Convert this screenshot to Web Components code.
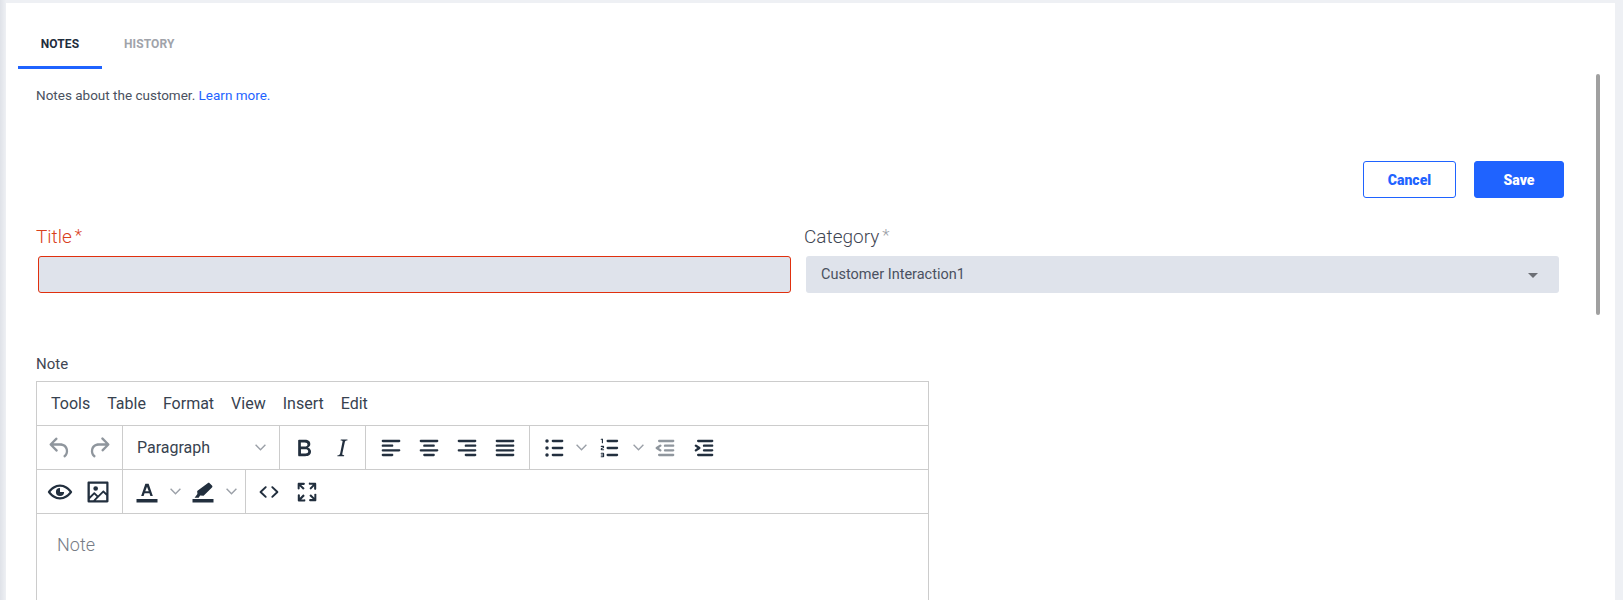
<!DOCTYPE html>
<html lang="en"><head><meta charset="utf-8"><title>Notes</title>
<style>
html,body{margin:0;height:600px;overflow:hidden}
body{background:linear-gradient(90deg,#dfe2e8 0,#eef0f4 6px);font-family:Roboto,"Liberation Sans",sans-serif}
</style></head><body>
<x-panel>
  <x-tabs slot="tabs"></x-tabs>
  <x-intro>Notes about the customer. <a slot="link">Learn more.</a></x-intro>
  <x-actions></x-actions>
  <x-fields></x-fields>
  <x-editor label="Note" placeholder="Note"></x-editor>
</x-panel>
<script>
const el=(name,css,html,init)=>customElements.define(name,class extends HTMLElement{
  constructor(){super();this.attachShadow({mode:'open'}).innerHTML=`<style>${css}</style>${html}`;}
  connectedCallback(){init&&init.call(this,this.shadowRoot)}
});
el('x-panel',`:host{display:block;position:relative;margin:3px 8px 0 6px;height:597px;background:#fff;overflow:hidden}
.bar{position:absolute;left:1590px;top:71px;width:4px;height:241px;background:#a0a0a0;border-radius:2px}
.in{padding:0 0 0 12px}`,`<div class="in"><slot name="tabs"></slot><slot></slot></div><div class="bar"></div>`);
el('x-tabs',`:host{display:flex;height:66px;font:700 12px/16px Roboto,sans-serif}
div{box-sizing:border-box;height:66px;display:flex;align-items:center;justify-content:center;padding:25px 0 6px;border-bottom:3px solid transparent;text-transform:uppercase;letter-spacing:.1px}
.a{width:84px;color:#1f2d3d;border-bottom-color:#1f63ff}
.b{padding-left:22px;color:#a0a3aa}`,`<div class="a">Notes</div><div class="b">History</div>`);
el('x-intro',`:host{display:block;margin:16px 0 0 18px;font:400 13.5px/20px Roboto,sans-serif;color:#4a5160}
::slotted(a){color:#1f63ff}`,`<slot></slot><slot name="link"></slot>`);
el('x-actions',`:host{display:flex;justify-content:flex-end;gap:18px;margin:56px 39px 0 0;box-sizing:border-box;width:1546px}
button{box-sizing:border-box;height:37px;font:900 14px Roboto,sans-serif;border-radius:3px;border:1px solid #1f63ff;padding:0}
.c{width:93px;background:#fff;color:#1f63ff}.s{width:90px;background:#1f63ff;color:#fff}`,`<button class="c">Cancel</button><button class="s">Save</button>`);
el('x-fields',`:host{display:grid;grid-template-columns:768px 768px;margin:27px 0 0 18px}
label{display:block;height:24px;font:300 19px/24px Roboto,sans-serif;color:#3f4653;margin-bottom:7px}
label i{font-style:normal;font-size:17px;line-height:0;color:#9a9ea6;margin-left:3px;position:relative;top:-2px}
.t label,.t label i{color:#d9401c}
.box{box-sizing:border-box;width:753px;height:37px;margin-left:2px;background:#dfe3eb;border-radius:3px}
.t .box{border:1px solid #e0300e}
.s .box{display:flex;align-items:center;justify-content:space-between;padding:0 21px 0 15px;font:400 14.5px Roboto,sans-serif;color:#4a5160}
.s b{width:0;height:0;border:5px solid transparent;border-top:5px solid #6c6f75;border-bottom:0;margin-top:1px}`,
`<div class="t"><label>Title<i>*</i></label><div class="box"></div></div>
<div class="s"><label>Category<i>*</i></label><div class="box"><span>Customer Interaction1</span><b></b></div></div>`);
const P={
undo:'M6.4 8H12c3.7 0 6.2 2 6.8 5.1.6 2.7-.4 5.6-2.3 6.8a1 1 0 0 1-1-1.8c1.1-.6 1.8-2.7 1.4-4.6-.5-2.1-2.1-3.5-4.9-3.5H6.4l3.3 3.3a1 1 0 1 1-1.4 1.4l-5-5a1 1 0 0 1 0-1.4l5-5a1 1 0 0 1 1.4 1.4L6.4 8Z',
redo:'M17.6 10H12c-2.8 0-4.4 1.4-4.9 3.5-.4 2 .3 4 1.4 4.6a1 1 0 1 1-1 1.8c-2-1.2-2.9-4.1-2.3-6.8.6-3 3-5.1 6.8-5.1h5.6l-3.3-3.3a1 1 0 1 1 1.4-1.4l5 5a1 1 0 0 1 0 1.4l-5 5a1 1 0 0 1-1.4-1.4l3.3-3.3Z',
bold:'M7.8 19c-.3 0-.5 0-.6-.2l-.2-.5V5.7c0-.2 0-.4.2-.5l.6-.2h5c1.5 0 2.7.3 3.5 1 .7.6 1.1 1.4 1.1 2.5a3 3 0 0 1-.6 1.9c-.4.6-1 1-1.6 1.2.4.1.9.3 1.3.6s.8.7 1 1.2c.4.4.5 1 .5 1.6 0 1.3-.4 2.3-1.3 3-.8.7-2.1 1-3.8 1H7.8Zm5-8.3c.6 0 1.2-.1 1.6-.5.4-.3.6-.7.6-1.3 0-1.1-.8-1.7-2.3-1.7H9.3v3.5h3.4Zm.5 6c.7 0 1.3-.1 1.7-.4.4-.4.6-.9.6-1.5s-.2-1-.7-1.4c-.4-.3-1-.4-2-.4H9.4v3.8h4Z',
italic:'m16.7 4.7-.1.9h-.3c-.6 0-1 0-1.4.3-.3.3-.4.6-.5 1.1l-2.1 9.8v.6c0 .5.4.8 1.4.8h.2l-.2.8H8l.2-.8h.2c1.1 0 1.8-.5 2-1.5l2-9.8.1-.5c0-.6-.4-.8-1.4-.8h-.3l.2-.9h5.8Z',
al:'M5 5h14c.6 0 1 .4 1 1s-.4 1-1 1H5a1 1 0 1 1 0-2Zm0 4h8c.6 0 1 .4 1 1s-.4 1-1 1H5a1 1 0 1 1 0-2Zm0 8h8c.6 0 1 .4 1 1s-.4 1-1 1H5a1 1 0 0 1 0-2Zm0-4h14c.6 0 1 .4 1 1s-.4 1-1 1H5a1 1 0 0 1 0-2Z',
ac:'M5 5h14c.6 0 1 .4 1 1s-.4 1-1 1H5a1 1 0 1 1 0-2Zm3 4h8c.6 0 1 .4 1 1s-.4 1-1 1H8a1 1 0 1 1 0-2Zm0 8h8c.6 0 1 .4 1 1s-.4 1-1 1H8a1 1 0 0 1 0-2Zm-3-4h14c.6 0 1 .4 1 1s-.4 1-1 1H5a1 1 0 0 1 0-2Z',
ar:'M5 5h14c.6 0 1 .4 1 1s-.4 1-1 1H5a1 1 0 1 1 0-2Zm6 4h8c.6 0 1 .4 1 1s-.4 1-1 1h-8a1 1 0 0 1 0-2Zm0 8h8c.6 0 1 .4 1 1s-.4 1-1 1h-8a1 1 0 0 1 0-2Zm-6-4h14c.6 0 1 .4 1 1s-.4 1-1 1H5a1 1 0 0 1 0-2Z',
aj:'M5 5h14c.6 0 1 .4 1 1s-.4 1-1 1H5a1 1 0 1 1 0-2Zm0 4h14c.6 0 1 .4 1 1s-.4 1-1 1H5a1 1 0 1 1 0-2Zm0 4h14c.6 0 1 .4 1 1s-.4 1-1 1H5a1 1 0 0 1 0-2Zm0 4h14c.6 0 1 .4 1 1s-.4 1-1 1H5a1 1 0 0 1 0-2Z',
ul:'M11 5h8c.6 0 1 .4 1 1s-.4 1-1 1h-8a1 1 0 0 1 0-2Zm0 6h8c.6 0 1 .4 1 1s-.4 1-1 1h-8a1 1 0 0 1 0-2Zm0 6h8c.6 0 1 .4 1 1s-.4 1-1 1h-8a1 1 0 0 1 0-2ZM4.500 6a1.500 1.500 0 1 1 3 0 1.500 1.500 0 0 1-3 0Zm0 6a1.500 1.500 0 1 1 3 0 1.500 1.500 0 0 1-3 0Zm0 6a1.500 1.500 0 1 1 3 0 1.500 1.500 0 0 1-3 0Z',
ol:'M10 17h8c.6 0 1 .4 1 1s-.4 1-1 1h-8a1 1 0 0 1 0-2Zm0-6h8c.6 0 1 .4 1 1s-.4 1-1 1h-8a1 1 0 0 1 0-2Zm0-6h8c.6 0 1 .4 1 1s-.4 1-1 1h-8a1 1 0 0 1 0-2ZM6 4v3.5c0 .3-.2.5-.5.5a.5.5 0 0 1-.5-.5V5h-.5a.5.5 0 0 1 0-1H6Zm-1 8.8.2.2h1.3c.3 0 .5.2.5.5s-.2.5-.5.5H4.900a1 1 0 0 1-.9-1V13c0-.4.3-.8.6-1l1.2-.4.2-.3a.2.2 0 0 0-.2-.2H4.500a.5.5 0 0 1-.5-.5c0-.3.2-.5.5-.5h1.600c.5 0 .9.4.9 1v.1c0 .4-.3.8-.6 1l-1.200.4-.2.3ZM7 17v2c0 .6-.4 1-1 1H4.500a.5.5 0 0 1 0-1h1.200c.2 0 .3-.1.3-.3 0-.2-.1-.3-.3-.3H4.400a.4.4 0 1 1 0-.8h1.300c.2 0 .3-.1.3-.3 0-.2-.1-.3-.3-.3H4.500a.5.5 0 1 1 0-1H6c.6 0 1 .4 1 1Z',
outdent:'M7 5h12c.6 0 1 .4 1 1s-.4 1-1 1H7a1 1 0 1 1 0-2Zm5 4h7c.6 0 1 .4 1 1s-.4 1-1 1h-7a1 1 0 0 1 0-2Zm0 4h7c.6 0 1 .4 1 1s-.4 1-1 1h-7a1 1 0 0 1 0-2Zm-5 4h12a1 1 0 0 1 0 2H7a1 1 0 0 1 0-2Zm1.600-3.800a1 1 0 0 1-1.200 1.600l-3-2a1 1 0 0 1 0-1.600l3-2a1 1 0 0 1 1.200 1.600L6.800 12l1.800 1.200Z',
indent:'M7 5h12c.6 0 1 .4 1 1s-.4 1-1 1H7a1 1 0 1 1 0-2Zm5 4h7c.6 0 1 .4 1 1s-.4 1-1 1h-7a1 1 0 0 1 0-2Zm0 4h7c.6 0 1 .4 1 1s-.4 1-1 1h-7a1 1 0 0 1 0-2Zm-5 4h12a1 1 0 0 1 0 2H7a1 1 0 0 1 0-2Zm-2.600-3.800L6.200 12l-1.800-1.200a1 1 0 0 1 1.200-1.600l3 2a1 1 0 0 1 0 1.600l-3 2a1 1 0 1 1-1.200-1.600Z',
eye:'M12 5.500c-4.200 0-7.900 2.500-10.300 6a1 1 0 0 0 0 1c2.400 3.500 6.100 6 10.300 6s7.900-2.500 10.300-6a1 1 0 0 0 0-1c-2.400-3.500-6.100-6-10.300-6Zm0 2c3.200 0 6 1.700 8.200 4.500-2.200 2.800-5 4.500-8.200 4.500S6 14.800 3.800 12C6 9.200 8.800 7.500 12 7.500ZM12 8.500a3.500 3.500 0 1 0 3.500 3.500h-3a.5.5 0 0 1-.5-.5v-3Z',
image:'m5 15.700 3.300-3.200c.3-.3.7-.3 1 0L12 15l4.100-4c.3-.4.8-.4 1 0l2 1.900V5H5v10.700ZM5 18v1h3l2.800-2.900-2-2L5 17.900Zm14-3-2.500-2.400-6.400 6.500H19v-4ZM4 3h16c.6 0 1 .4 1 1v16c0 .6-.4 1-1 1H4a1 1 0 0 1-1-1V4c0-.6.4-1 1-1Zm6 8a2 2 0 1 0 0-4 2 2 0 0 0 0 4Z',
color:'M3 18h18v3H3v-3ZM10.600 5h2.800l3.600 10.500h-2.100l-.8-2.500H9.900l-.8 2.500H7L10.600 5Zm1.400 2.400L10.500 11.300h3L12 7.400Z',
hilite:'M3 18h18v3H3v-3ZM16 4.500c.5-.5 1.200-.5 1.700 0l2 2c.5.5.5 1.200 0 1.700L12.500 15.300l-3-.2-1.200 1.900H4.800l2.400-3.300-.2-2.600L16 4.500Z',
code:'M9.800 15.700c.3.3.3.8 0 1-.3.4-.9.4-1.200 0l-4.400-4.100a.8.8 0 0 1 0-1.200l4.400-4.200c.3-.3.9-.3 1.200 0 .3.3.3.8 0 1.100L6 12l3.800 3.700ZM14.200 15.700 18 12l-3.800-3.700c-.3-.3-.3-.8 0-1.100.3-.3.9-.3 1.200 0l4.400 4.200c.3.3.3.9 0 1.200l-4.400 4.100c-.3.4-.9.4-1.200 0a.8.8 0 0 1 0-1Z',
full:'m15.300 10-1.200-1.300 2.900-3h-2.300a.9.9 0 1 1 0-1.700H19c.5 0 .9.4.9.9v4.400a.9.9 0 1 1-1.800 0V7l-2.900 3Zm0 4 3 3v-2.300a.9.9 0 1 1 1.700 0V19c0 .5-.4.9-.9.9h-4.400a.9.9 0 1 1 0-1.800H17l-3-2.900 1.300-1.200ZM10 15.400l-2.900 3h2.300a.9.9 0 1 1 0 1.700H5a.9.9 0 0 1-.9-.9v-4.400a.9.9 0 1 1 1.800 0V17l2.900-3 1.200 1.300ZM8.700 10 5.700 7v2.300a.9.9 0 0 1-1.700 0V5c0-.5.4-.9.9-.9h4.400a.9.9 0 0 1 0 1.800H7l3 2.900-1.300 1.200Z'};
el('tb-icon',`:host{display:flex;align-items:center;justify-content:center;width:38px;height:43px;flex:none}
:host([off]) svg{opacity:.5}
svg{width:28px;height:28px;fill:#222f3e;display:block;flex:none}`,`<svg viewBox="0 0 24 24"><path fill-rule="evenodd"></path></svg>`,function(r){r.querySelector('path').setAttribute('d',P[this.getAttribute('n')])});
el('tb-chev',`:host{display:flex;align-items:center;justify-content:center;flex:none;width:20px;height:43px}
svg{width:11px;height:7px;fill:none;stroke:#9ba0a8;stroke-width:1.4;display:block}`,`<svg viewBox="0 0 11 7"><path d="M.6.8 5.500 5.700 10.400.8"></path></svg>`);
el('tb-group',`:host{display:flex;box-sizing:border-box;height:43px;border-right:1px solid #ccc;flex:none}
:host([last]){border-right:0}`,`<slot></slot>`);
el('tb-row',`:host{display:flex;height:43px;border-bottom:1px solid #ccc}`,`<slot></slot>`);
el('tb-select',`:host{display:flex;align-items:center;justify-content:space-between;box-sizing:border-box;width:157px;height:43px;padding:0 9px 0 14px;font:400 16px Roboto,sans-serif;color:#37424f}`,`<slot></slot>`);
el('x-editor',`:host{display:block;margin:61px 0 0 18px}
label{display:block;font:400 15px/20px Roboto,sans-serif;color:#3f4653;margin-bottom:7px}
.box{box-sizing:border-box;width:893px;height:400px;border:1px solid #ccc}
.menu{display:flex;align-items:center;gap:17px;height:43px;padding-left:14px;border-bottom:1px solid #ccc;font:400 16px Roboto,sans-serif;color:#37424f}
.ph{padding:20px 20px;font:300 18px/22px Roboto,sans-serif;color:#767c86}`,
`<label></label><div class="box"><div class="menu"><span>Tools</span><span>Table</span><span>Format</span><span>View</span><span>Insert</span><span>Edit</span></div>
<tb-row>
<tb-group style="width:86px;padding-left:4px;gap:1px"><tb-icon n="undo" off></tb-icon><tb-icon n="redo" off></tb-icon></tb-group>
<tb-group style="width:157px"><tb-select><span>Paragraph</span><tb-chev></tb-chev></tb-select></tb-group>
<tb-group style="width:86px;padding-left:5px"><tb-icon n="bold"></tb-icon><tb-icon n="italic"></tb-icon></tb-group>
<tb-group style="width:164px;padding-left:6px"><tb-icon n="al"></tb-icon><tb-icon n="ac"></tb-icon><tb-icon n="ar"></tb-icon><tb-icon n="aj"></tb-icon></tb-group>
<tb-group last style="padding-left:5px"><tb-icon n="ul"></tb-icon><tb-chev style="width:16px"></tb-chev><tb-icon n="ol" style="width:42px"></tb-icon><tb-chev style="width:14px"></tb-chev><tb-icon n="outdent" style="width:40px" off></tb-icon><tb-icon n="indent"></tb-icon></tb-group>
</tb-row>
<tb-row>
<tb-group style="width:86px;padding-left:4px"><tb-icon n="eye"></tb-icon><tb-icon n="image"></tb-icon></tb-group>
<tb-group style="width:123px;padding-left:5px"><tb-icon n="color"></tb-icon><tb-chev style="width:18px"></tb-chev><tb-icon n="hilite"></tb-icon><tb-chev style="width:18px"></tb-chev></tb-group>
<tb-group last style="padding-left:4px"><tb-icon n="code"></tb-icon><tb-icon n="full"></tb-icon></tb-group>
</tb-row>
<div class="ph"></div></div>`,function(r){r.querySelector('label').textContent=this.getAttribute('label');r.querySelector('.ph').textContent=this.getAttribute('placeholder')});
</script>
</body></html>
